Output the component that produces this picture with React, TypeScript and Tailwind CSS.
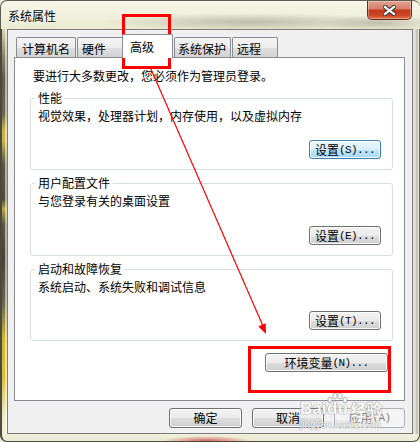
import React from "react";

const FONT = "font-['Noto_Sans_CJK_SC','Noto_Sans',sans-serif]";

function Latin({ children }: { children: React.ReactNode }) {
  return (
    <span className="font-['Liberation_Mono',monospace] text-[11px] tracking-[-0.6px]">{children}</span>
  );
}

type BtnProps = { children: React.ReactNode; className: string; variant?: "normal" | "blue" | "disabled" };

function WinButton({ children, className, variant = "normal" }: BtnProps) {
  const base =
    "flex items-center justify-center rounded-[3px] border text-[12px] leading-[14px] shadow-[inset_0_0_0_1px_rgba(255,255,255,0.85)]";
  const v =
    variant === "blue"
      ? "border-[#3c7fb1] bg-[linear-gradient(to_bottom,#eaf6fd_0%,#d9f0fc_50%,#bee6fd_50%,#a7d9f5_100%)] text-black"
      : variant === "disabled"
      ? "border-[#adb2b5] bg-[#f4f4f4] text-[#838383] shadow-none"
      : "border-[#707070] bg-[linear-gradient(to_bottom,#f2f2f2_0%,#ebebeb_50%,#dddddd_50%,#cfcfcf_100%)] text-black";
  return <div className={`${base} ${v} ${className}`}>{children}</div>;
}

function Group({
  title,
  desc,
  btn,
  btnMt,
  className,
}: {
  title: string;
  desc: string;
  btn: React.ReactNode;
  btnMt: string;
  className: string;
}) {
  return (
    <fieldset className={`border border-[#d5dfe5] rounded-[3px] pl-[4px] pr-[11px] pb-[10px] ${className}`}>
      <legend className="px-[3px] leading-[14px]">{title}</legend>
      <div className="flex flex-col">
        <div className="mt-[4px] pl-[3px] leading-[14px]">{desc}</div>
        <div className={`self-end ${btnMt}`}>{btn}</div>
      </div>
    </fieldset>
  );
}

export default function App() {
  return (
    <div
      className={`relative w-[420px] h-[442px] overflow-hidden flex flex-col bg-[#ecebd6] ${FONT} text-[12px] leading-[14px] text-black`}
    >
      {/* Title bar */}
      <div className="h-[29px] flex items-start justify-between rounded-tl-[7px] rounded-tr-[7px] border-l border-t border-[#5d5d50] bg-[radial-gradient(ellipse_150px_9px_at_250px_21px,rgba(130,130,120,0.45),transparent),radial-gradient(ellipse_60px_8px_at_380px_22px,rgba(130,130,120,0.4),transparent),linear-gradient(to_bottom,#f7f6e8,#ebead1)]">
        <div className="pl-[7px] pt-[8px] leading-[14px] [text-shadow:0_0_6px_#ffffff,0_0_3px_#ffffff]">系统属性</div>
        <div className="mr-[8px] w-[45px] h-[19px] rounded-b-[5px] border border-t-0 border-[#6d2a1c] bg-[linear-gradient(to_bottom,#e3a393_0%,#d5806c_42%,#c53a1d_52%,#cc4626_80%,#e0774a_100%)] shadow-[inset_0_0_0_1px_rgba(255,255,255,0.3)] flex items-center justify-center">
          <svg width="13" height="11" viewBox="0 0 13 11">
            <path d="M2 2 L11 9 M11 2 L2 9" stroke="#3b3b3b" strokeWidth="4.2" strokeLinecap="square" />
            <path d="M2 2 L11 9 M11 2 L2 9" stroke="#ffffff" strokeWidth="2.2" strokeLinecap="square" />
          </svg>
        </div>
      </div>

      {/* Middle row */}
      <div className="flex h-[405px]">
        <div className="w-[7px] border-l-[2px] border-[#4a4a3e] shadow-[inset_-2px_0_0_rgba(255,255,240,0.55)] bg-[linear-gradient(to_bottom,#d9d6b6_0px,#8c8a70_25px,#5d5c4a_50px,#6a6850_85px,#c4b048_100px,#c8b44a_112px,#5a5844_135px,#4e4c3c_170px,#b8a440_180px,#5b5946_195px,#454336_230px,#6b6850_275px,#d0b830_310px,#d8c040_350px,#ece8c0_385px,#f0efd8_405px)]" />
        <div className="w-[406px] border border-[#7b7b7b] bg-[#f0f0f0] pt-[4px] pl-[6px] pr-[7px] flex flex-col">
          {/* Tabs */}
          <div className="h-[23px] flex items-end pl-[2px]">
            <div className="w-[60px] h-[20px] mr-[1px] border border-b-0 border-[#898c95] rounded-t-[2px] bg-[linear-gradient(to_bottom,#f4f4f4,#ececec_50%,#dedede_55%,#d2d2d2)] pl-[5px] pt-[4px] leading-[14px]">
              计算机名
            </div>
            <div className="w-[47px] h-[20px] border border-b-0 border-[#898c95] rounded-t-[2px] bg-[linear-gradient(to_bottom,#f4f4f4,#ececec_50%,#dedede_55%,#d2d2d2)] pl-[4px] pt-[4px] leading-[14px]">
              硬件
            </div>
            <div className="relative z-10 -ml-[2px] -mb-[1px] w-[51px] h-[24px] border border-b-0 border-[#898c95] rounded-t-[2px] bg-white pl-[7px] pt-[5px] leading-[14px]">
              高级
            </div>
            <div className="ml-[1px] w-[57px] h-[20px] mr-[1px] border border-b-0 border-[#898c95] rounded-t-[2px] bg-[linear-gradient(to_bottom,#f4f4f4,#ececec_50%,#dedede_55%,#d2d2d2)] pl-[3px] pt-[4px] leading-[14px]">
              系统保护
            </div>
            <div className="w-[46px] h-[20px] border border-b-0 border-[#898c95] rounded-t-[2px] bg-[linear-gradient(to_bottom,#f4f4f4,#ececec_50%,#dedede_55%,#d2d2d2)] pl-[4px] pt-[4px] leading-[14px]">
              远程
            </div>
          </div>

          {/* Panel */}
          <div className="h-[344px] border border-[#898c95] bg-white pt-[11px] pl-[15px] pr-[11px] flex flex-col">
            <div className="ml-[3px] leading-[14px]">要进行大多数更改，您必须作为管理员登录。</div>
            <Group
              className="mt-[8px]"
              title="性能"
              desc="视觉效果，处理器计划，内存使用，以及虚拟内存"
              btnMt="mt-[17px]"
              btn={
                <WinButton className="w-[72px] h-[19px]" variant="blue">
                  设置<Latin>(S)...</Latin>
                </WinButton>
              }
            />
            <Group
              className="mt-[6px]"
              title="用户配置文件"
              desc="与您登录有关的桌面设置"
              btnMt="mt-[18px]"
              btn={
                <WinButton className="w-[72px] h-[19px]">
                  设置<Latin>(E)...</Latin>
                </WinButton>
              }
            />
            <Group
              className="mt-[6px]"
              title="启动和故障恢复"
              desc="系统启动、系统失败和调试信息"
              btnMt="mt-[17px]"
              btn={
                <WinButton className="w-[72px] h-[19px]">
                  设置<Latin>(T)...</Latin>
                </WinButton>
              }
            />
            <div className="self-end mt-[12px] mr-[5px]">
              <WinButton className="w-[123px] h-[19px]">
                环境变量<Latin>(N)...</Latin>
              </WinButton>
            </div>
          </div>

          {/* Bottom buttons */}
          <div className="mt-[7px] flex justify-end gap-[10px]">
            <WinButton className="w-[73px] h-[20px]">确定</WinButton>
            <WinButton className="w-[72px] h-[20px]">取消</WinButton>
            <WinButton className="w-[71px] h-[20px]" variant="disabled">
              应用<Latin>(A)</Latin>
            </WinButton>
          </div>
        </div>
        <div className="w-[7px] border-r border-[#6a6a60] bg-[linear-gradient(to_right,#e6e6de_0px,#d6d6ce_3px,#b0b0a8_4px,#dedcd2_5px,#ecebe0_6px)]" />
      </div>

      {/* Bottom frame */}
      <div className="h-[8px] rounded-bl-[7px] rounded-br-[7px] border-l-[2px] border-b border-r border-[#4a4a3e] bg-[radial-gradient(ellipse_45px_5px_at_205px_7px,rgba(210,70,70,0.85),transparent),linear-gradient(to_bottom,#eef0dc,#e8ead2)]" />

      {/* Watermark */}
      <div className="absolute left-[300px] top-[392px] pointer-events-none opacity-85">
        <div className="flex items-end text-white [text-shadow:0_0_1px_#8a8a8a,0_0_1px_#8a8a8a,0_0_1px_#8a8a8a]">
          <span className="font-['Liberation_Sans',sans-serif] font-bold text-[17px] leading-[20px]">Bai</span>
          <span className="relative flex flex-col items-center">
            <svg width="22" height="12" viewBox="0 0 22 12" className="-mb-[1px]">
              <g fill="#ffffff" stroke="#8a8a8a" strokeWidth="0.8">
                <ellipse cx="4" cy="8" rx="2.2" ry="2.8" />
                <ellipse cx="9" cy="4" rx="2.2" ry="3" />
                <ellipse cx="14" cy="4" rx="2.2" ry="3" />
                <ellipse cx="19" cy="8" rx="2.2" ry="2.8" />
              </g>
            </svg>
            <span className="font-['Liberation_Sans',sans-serif] font-bold text-[17px] leading-[20px] -mt-[4px]">du</span>
          </span>
          <span className="ml-[2px] text-[16px] leading-[20px] font-bold">经验</span>
        </div>
        <div className="font-['Liberation_Sans',sans-serif] text-[10px] leading-[12px] text-white [text-shadow:0_0_1px_#8a8a8a,0_0_1px_#8a8a8a]">
          jingyan.baidu.com
        </div>
      </div>

      {/* Red annotations */}
      <svg className="absolute left-0 top-0 pointer-events-none" width="420" height="442" viewBox="0 0 420 442">
        <rect x="123.5" y="15.5" width="46" height="52" fill="none" stroke="#ff0000" strokeWidth="3" />
        <rect x="249.5" y="347.5" width="140" height="44" fill="none" stroke="#ff0000" strokeWidth="3" />
        <line x1="150.5" y1="68" x2="263" y2="326" stroke="#ff0000" strokeWidth="1.2" />
        <polygon points="258.3,326.4 265.7,323.2 266,334" fill="#ff0000" />
      </svg>
    </div>
  );
}
